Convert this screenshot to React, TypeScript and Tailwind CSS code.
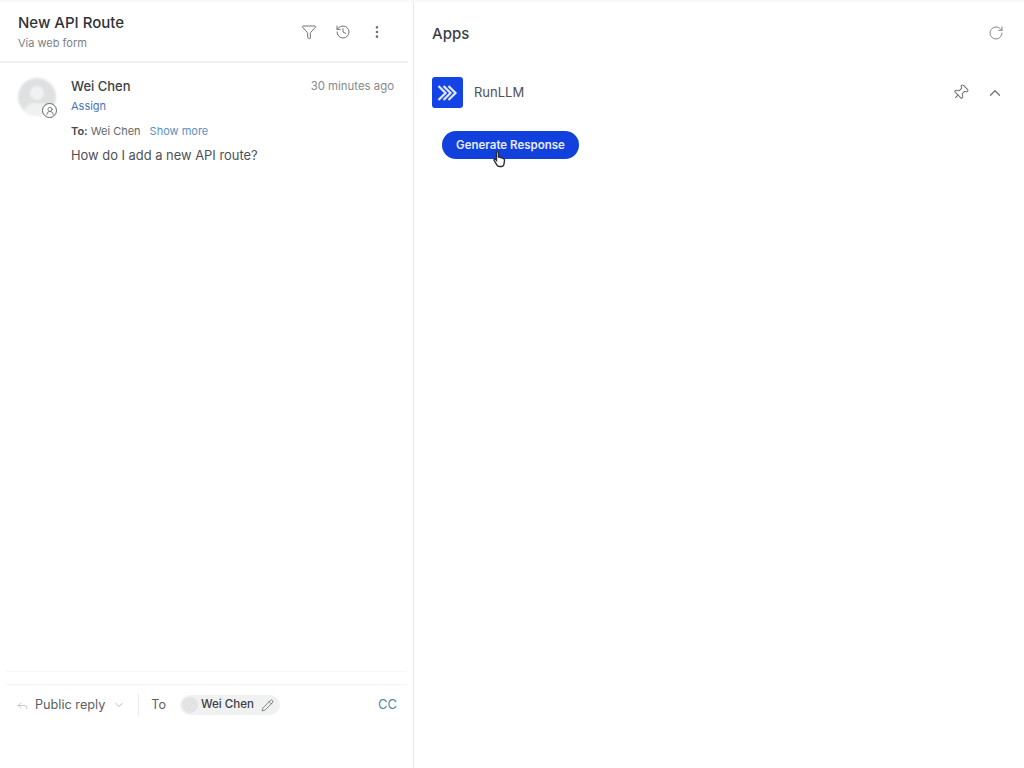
import { ChevronDown, ChevronUp, EllipsisVertical, Funnel, History, Pencil, Pin, RotateCw, Reply, UserRound } from "lucide-react";

const font = { fontFamily: "Inter, 'Liberation Sans', sans-serif" };

function LeftPanel() {
  return (
    <div className="w-[414px] shrink-0 h-full flex flex-col border-r border-[#e6e8ea]">
      {/* header */}
      <div className="h-[61px] shrink-0 flex items-start justify-between border-b-2 border-[#eef0f1] mr-[5px] pl-[18px] pr-[23px] pt-[11px]">
        <div>
          <div className="text-[15px] leading-5 font-medium text-[#2f3338]">New API Route</div>
          <div className="text-[11px] leading-4 mt-[2px] text-[#7b8086]">Via web form</div>
        </div>
        <div className="flex items-center gap-[18px] text-[#6f7378] mt-[11px]">
          <Funnel size={16} strokeWidth={1.5} />
          <History size={16} strokeWidth={1.5} />
          <EllipsisVertical size={16} strokeWidth={2} />
        </div>
      </div>

      {/* message */}
      <div className="flex-1 flex pl-[18px] pr-[19px] pt-[15px]">
        <div className="relative w-[38px] h-[38px] shrink-0">
          <div className="w-full h-full rounded-full bg-[#dfe0e1] overflow-hidden relative blur-[1px]">
            <div className="absolute left-[12px] top-[8px] w-[14px] h-[14px] rounded-full bg-[#f1f1f1]" />
            <div className="absolute left-[6px] top-[25px] w-[26px] h-[20px] rounded-full bg-[#f1f1f1]" />
          </div>
          <div className="absolute -right-[1px] -bottom-[2px] w-[15px] h-[15px] rounded-full bg-white border border-[#62666b] flex items-center justify-center text-[#55595e]">
            <UserRound size={10} strokeWidth={1.75} />
          </div>
        </div>
        <div className="flex-1 ml-[16px] -translate-x-px">
          <div className="flex items-center justify-between">
            <span className="text-[13px] leading-4 font-medium text-[#3b3f44]">Wei Chen</span>
            <span className="text-[11.4px] leading-4 text-[#85898e] translate-x-px">30 minutes ago</span>
          </div>
          <div className="text-[11px] leading-4 mt-[4px] text-[#4a74b8]">Assign</div>
          <div className="text-[11px] leading-4 mt-[9px] text-[#63676c]">
            <span className="font-semibold text-[#45494e]">To:</span> Wei Chen
            <span className="ml-[9px] text-[#5a8fc4]">Show more</span>
          </div>
          <div className="text-[12.9px] leading-4 mt-[9px] text-[#4d5156]">How do I add a new API route?</div>
        </div>
      </div>

      {/* reply bar */}
      <div className="h-[97px] shrink-0 mx-[6px] border-t border-[#f5f6f6] pt-[12px]">
        <div className="border-t border-[#f3f4f4] pt-[8px]">
          <div className="flex items-center h-[24px] pl-[10px] pr-[10px]">
            <Reply size={13} strokeWidth={1.25} className="text-[#a9acb0]" />
            <span className="ml-[6px] text-[12.7px] text-[#5c6065]">Public reply</span>
            <ChevronDown size={12} strokeWidth={1.25} className="ml-[8px] text-[#8a8e93]" />
            <div className="ml-[13px] w-px h-[22px] bg-[#e9ebec]" />
            <span className="ml-[12px] text-[12.5px] text-[#5c6065]">To</span>
            <div className="ml-[14px] h-[20px] flex items-center rounded-full bg-[#f0f1f1] pl-[2px] pr-[6px]">
              <div className="w-[16px] h-[16px] rounded-full bg-[#e2e3e4]" />
              <span className="ml-[3px] text-[11.6px] font-medium text-[#3b3f44]">Wei Chen</span>
              <Pencil size={13} strokeWidth={1.25} className="ml-[7px] text-[#4d5156]" />
            </div>
            <span className="ml-auto text-[13px] text-[#5a86a8]">CC</span>
          </div>
        </div>
      </div>
    </div>
  );
}

function RightPanel() {
  return (
    <div className="flex-1 h-full pl-[18px] pr-[20px]">
      <div className="h-[61px] flex items-start justify-between pt-[22px]">
        <span className="text-[15px] leading-5 font-medium text-[#3b3f44]">Apps</span>
        <RotateCw size={16} strokeWidth={1.5} className="text-[#85898e] mt-[1px]" />
      </div>
      <div className="mt-[14px] flex items-center justify-between">
        <div className="flex items-center">
          <div className="w-[31px] h-[31px] rounded-[3px] bg-[#1444e6] flex items-center justify-center">
            <svg width="21" height="18" viewBox="0 0 21 18" fill="none" stroke="#e2e9ff" strokeWidth="2.2">
              <path d="M1.5 2 L8.5 9 L1.5 16" />
              <path d="M6.5 2 L13.5 9 L6.5 16" />
              <path d="M11.5 2 L18.5 9 L11.5 16" />
            </svg>
          </div>
          <span className="ml-[11px] text-[13px] text-[#4d5156]">RunLLM</span>
        </div>
        <div className="flex items-center gap-[17px] text-[#6f7378]">
          <Pin size={17} strokeWidth={1.5} className="rotate-45" />
          <ChevronUp size={18} strokeWidth={1.75} />
        </div>
      </div>
      <div className="relative mt-[23px] ml-[10px] w-[137px] h-[28px] rounded-full bg-[#1140dc] flex items-center justify-center">
        <span className="text-[11.5px] font-semibold text-[#e6edff] translate-y-px">Generate Response</span>
        <svg className="absolute left-[51px] top-[20px]" width="13" height="17" viewBox="0 0 13 17">
          <path d="M3.5 1.5 C3.5 .6 5.5 .6 5.5 1.5 V6 L9.5 7 C11 7.4 11.6 8 11.5 9.5 L11 13 C10.8 14.8 10 15.5 8.5 15.5 H6.5 C5.2 15.5 4.5 15 3.8 13.8 L1.2 9.5 C.7 8.6 2 7.6 2.8 8.5 L3.5 9.3 Z" fill="#fff" stroke="#2a2e32" strokeWidth="1.4" />
        </svg>
      </div>
    </div>
  );
}

export default function App() {
  return (
    <div className="w-[1024px] h-[768px] flex bg-white overflow-hidden border-t-2 border-[#f8f8f8]" style={font}>
      <LeftPanel />
      <RightPanel />
    </div>
  );
}
